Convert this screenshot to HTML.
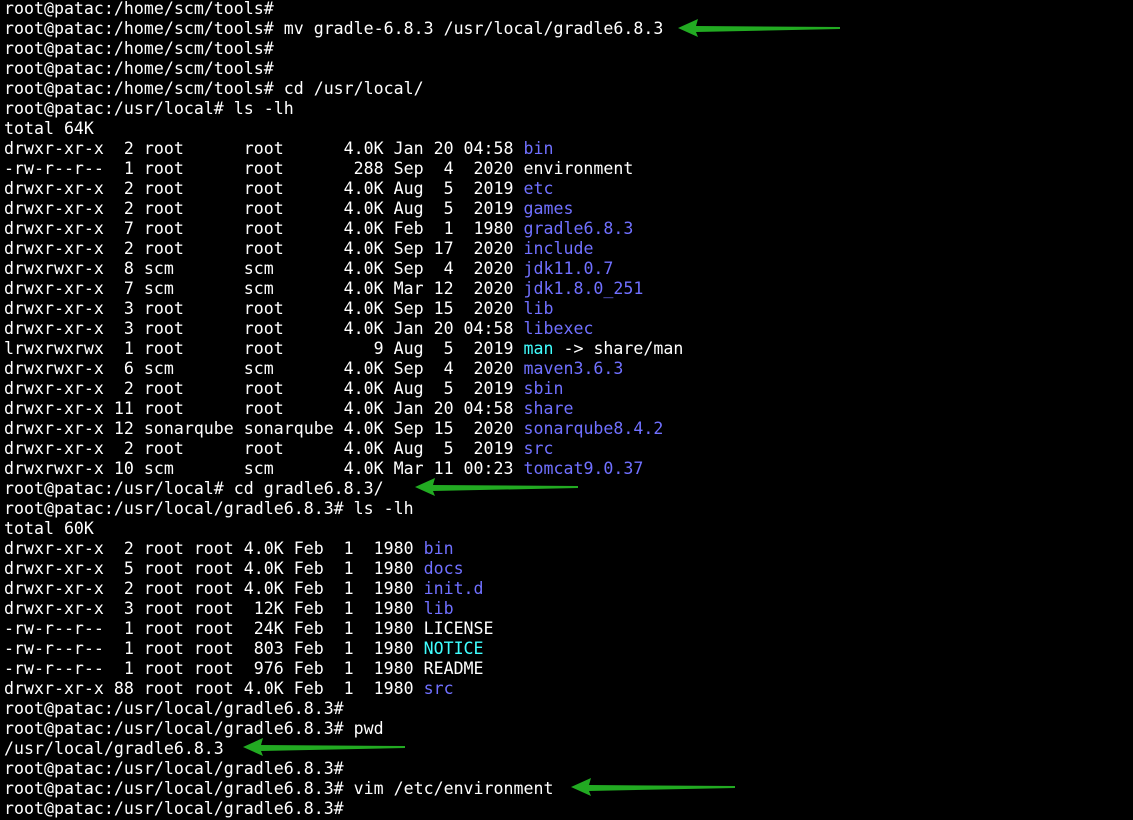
<!DOCTYPE html>
<html><head><style>
body{margin:0;background:#000;width:1133px;height:820px;overflow:hidden;position:relative}
pre{margin:0;position:absolute;left:4px;top:-1px;font-family:"DejaVu Sans Mono","Liberation Mono",monospace;font-size:16.6px;line-height:20px;color:#fff}
.b{color:#7070ff}.c{color:#40ffff}
svg{position:absolute;left:0;top:0}
</style></head><body>
<pre>root@patac:/home/scm/tools#
root@patac:/home/scm/tools# mv gradle-6.8.3 /usr/local/gradle6.8.3
root@patac:/home/scm/tools#
root@patac:/home/scm/tools#
root@patac:/home/scm/tools# cd /usr/local/
root@patac:/usr/local# ls -lh
total 64K
drwxr-xr-x  2 root      root      4.0K Jan 20 04:58 <span class="b">bin</span>
-rw-r--r--  1 root      root       288 Sep  4  2020 environment
drwxr-xr-x  2 root      root      4.0K Aug  5  2019 <span class="b">etc</span>
drwxr-xr-x  2 root      root      4.0K Aug  5  2019 <span class="b">games</span>
drwxr-xr-x  7 root      root      4.0K Feb  1  1980 <span class="b">gradle6.8.3</span>
drwxr-xr-x  2 root      root      4.0K Sep 17  2020 <span class="b">include</span>
drwxrwxr-x  8 scm       scm       4.0K Sep  4  2020 <span class="b">jdk11.0.7</span>
drwxr-xr-x  7 scm       scm       4.0K Mar 12  2020 <span class="b">jdk1.8.0_251</span>
drwxr-xr-x  3 root      root      4.0K Sep 15  2020 <span class="b">lib</span>
drwxr-xr-x  3 root      root      4.0K Jan 20 04:58 <span class="b">libexec</span>
lrwxrwxrwx  1 root      root         9 Aug  5  2019 <span class="c">man</span> -&gt; share/man
drwxrwxr-x  6 scm       scm       4.0K Sep  4  2020 <span class="b">maven3.6.3</span>
drwxr-xr-x  2 root      root      4.0K Aug  5  2019 <span class="b">sbin</span>
drwxr-xr-x 11 root      root      4.0K Jan 20 04:58 <span class="b">share</span>
drwxr-xr-x 12 sonarqube sonarqube 4.0K Sep 15  2020 <span class="b">sonarqube8.4.2</span>
drwxr-xr-x  2 root      root      4.0K Aug  5  2019 <span class="b">src</span>
drwxrwxr-x 10 scm       scm       4.0K Mar 11 00:23 <span class="b">tomcat9.0.37</span>
root@patac:/usr/local# cd gradle6.8.3/
root@patac:/usr/local/gradle6.8.3# ls -lh
total 60K
drwxr-xr-x  2 root root 4.0K Feb  1  1980 <span class="b">bin</span>
drwxr-xr-x  5 root root 4.0K Feb  1  1980 <span class="b">docs</span>
drwxr-xr-x  2 root root 4.0K Feb  1  1980 <span class="b">init.d</span>
drwxr-xr-x  3 root root  12K Feb  1  1980 <span class="b">lib</span>
-rw-r--r--  1 root root  24K Feb  1  1980 LICENSE
-rw-r--r--  1 root root  803 Feb  1  1980 <span class="c">NOTICE</span>
-rw-r--r--  1 root root  976 Feb  1  1980 README
drwxr-xr-x 88 root root 4.0K Feb  1  1980 <span class="b">src</span>
root@patac:/usr/local/gradle6.8.3#
root@patac:/usr/local/gradle6.8.3# pwd
/usr/local/gradle6.8.3
root@patac:/usr/local/gradle6.8.3#
root@patac:/usr/local/gradle6.8.3# vim /etc/environment
root@patac:/usr/local/gradle6.8.3#</pre>
<svg width="1133" height="820">
<g fill="#22aa22">
<path d="M678 28 L698 19 L696 26 L840 27 L840 29 L696 32 L698 37 Z"/>
<path d="M415 487 L435 478 L433 485 L578 486 L578 488 L433 491 L435 496 Z"/>
<path d="M243 747 L263 738 L261 745 L405 746 L405 748 L261 751 L263 756 Z"/>
<path d="M571 787 L591 778 L589 785 L735 786 L735 788 L589 791 L591 796 Z"/>
</g></svg>
</body></html>
